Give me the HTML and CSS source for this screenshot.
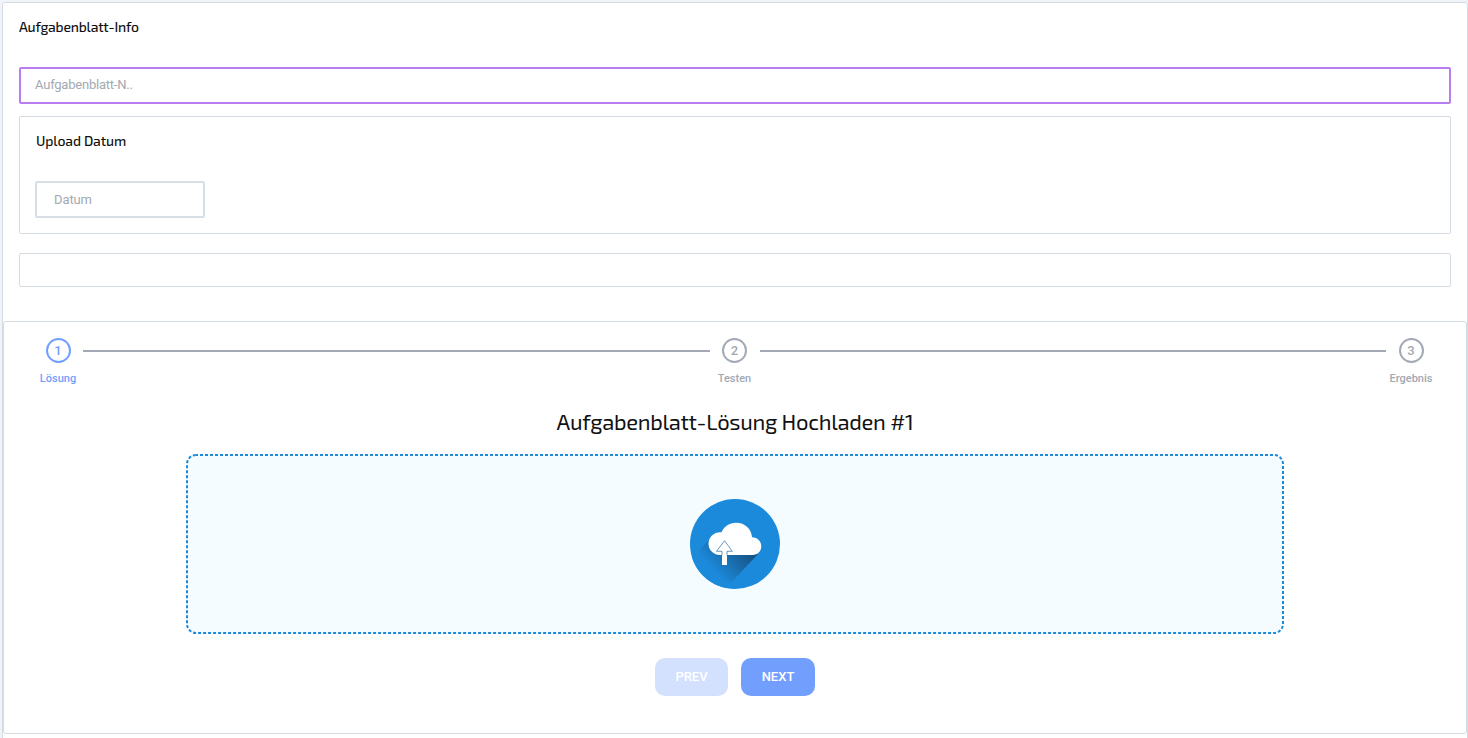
FILE: index.html
```html
<!DOCTYPE html>
<html lang="de">
<head>
<meta charset="utf-8">
<title>Aufgabenblatt</title>
<link rel="stylesheet" href="styles.css">
</head>
<body>
<main class="sheet">
  <section class="info">
    <h2 class="heading">Aufgabenblatt-Info</h2>
    <input class="name-input" type="text" placeholder="Aufgabenblatt-N.." aria-label="Aufgabenblatt-Name">
    <div class="date-card">
      <h2 class="heading heading-date">Upload Datum</h2>
      <input class="date-input" type="text" placeholder="Datum" aria-label="Datum">
    </div>
    <div class="empty-card"></div>
  </section>
  <section class="wizard">
    <div class="stepper">
      <div class="step active"><span class="dot">1</span><span class="label">Lösung</span></div>
      <div class="line"></div>
      <div class="step"><span class="dot">2</span><span class="label">Testen</span></div>
      <div class="line"></div>
      <div class="step"><span class="dot">3</span><span class="label">Ergebnis</span></div>
    </div>
    <h1 class="title">Aufgabenblatt-Lösung Hochladen #1</h1>
    <div class="dropzone">
      <svg class="outline" width="1098" height="180" viewBox="0 0 1098 180">
        <rect x="1" y="1" width="1096" height="178" rx="9" fill="none" stroke="#1c8adb" stroke-width="2" stroke-dasharray="3 2" stroke-dashoffset="1"/>
      </svg>
      <svg width="90" height="90" viewBox="0 0 90 90">
        <defs>
          <clipPath id="disc"><circle cx="45" cy="45" r="45"/></clipPath>
          <linearGradient id="shade" gradientUnits="userSpaceOnUse" x1="59" y1="50" x2="29" y2="78">
            <stop offset="0" stop-color="#17507f"/>
            <stop offset="1" stop-color="#1c8adb"/>
          </linearGradient>
        </defs>
        <circle cx="45" cy="45" r="45" fill="#1c8adb"/>
        <path clip-path="url(#disc)" d="M20 40 L0 60 V90 H35 L68 55 Z" fill="url(#shade)"/>
        <path d="M29.5 56 A11.3 11.3 0 0 1 18.5 44.7 C18.5 37.5 24.5 32.5 31.5 33.2 C34 27.3 39.5 23.7 46 23.7 C55 23.7 61.5 30 62 38.3 C67.5 38.3 71.3 42.3 71.3 47.3 C71.3 52.3 67.5 56 62.7 56 Z" fill="#fff"/>
        <path d="M34.5 41.7 L42.3 52.3 H37 V66 H32 V52.3 H26.5 Z" fill="#fff"/>
        <path d="M32 56 V52.3 H26.5 L34.5 41.7 L42.3 52.3 H37 V56" fill="none" stroke="#427eae" stroke-width="0.8"/>
      </svg>
    </div>
    <div class="actions">
      <button class="btn btn-prev" disabled>PREV</button>
      <button class="btn btn-next">NEXT</button>
    </div>
  </section>
</main>
</body>
</html>
```
FILE: styles.css
```css
* { box-sizing: border-box; }
body {
  margin: 0;
  height: 738px;
  overflow: hidden;
  background: #f0f4f8;
  font-family: Roboto, "Liberation Sans", sans-serif;
  color: #111;
}
.sheet {
  margin: 2px 0 0 2px;
  height: 760px;
  background: #fff;
  border: 1px solid #d5dbe2;
  border-radius: 3px;
}
.info { padding: 15px 16px 0; height: 318px; }
.heading {
  margin: 0;
  height: 18px;
  font: 500 14px/18px "Exo 2", Exo, Roboto, sans-serif;
  letter-spacing: -0.22px;
}
.heading-date { padding-left: 1px; letter-spacing: -0.12px; }
input {
  display: block;
  font: 400 13px/16px Roboto, sans-serif;
  background: #fff;
  border: 2px solid #d8dee5;
  border-radius: 2px;
  outline: 0;
}
input::placeholder { color: #a2a9b2; opacity: 1; }
.name-input {
  width: 100%;
  height: 37px;
  margin-top: 31px;
  padding: 0 14px 2px;
  border-color: #b87df0;
  letter-spacing: -0.22px;
}
.date-card {
  height: 118px;
  margin-top: 12px;
  padding: 15px 15px 0;
  border: 1px solid #d5dbe2;
  border-radius: 2px;
}
.date-input { width: 170px; height: 37px; margin-top: 31px; padding: 0 17px; letter-spacing: -0.1px; }
.empty-card {
  height: 34px;
  margin-top: 19px;
  border: 1px solid #d5dbe2;
  border-radius: 2px;
}
.wizard {
  height: 413px;
  border: 1px solid #d5dbe2;
  border-radius: 3px;
  display: flex;
  flex-direction: column;
  align-items: center;
}
.stepper {
  width: 100%;
  padding: 16px 31px 0 30px;
  display: flex;
  align-items: flex-start;
}
.step {
  width: 48px;
  flex: none;
  display: flex;
  flex-direction: column;
  align-items: center;
  color: #a2a9b4;
}
.step.active { color: #729ffe; }
.dot {
  width: 25px;
  height: 25px;
  border: 2px solid currentColor;
  border-radius: 50%;
  font: 500 13px/21px Roboto, sans-serif;
  text-align: center;
}
.label { margin-top: 9px; font: 500 11px/14px Roboto, sans-serif; }
.line { flex: 1; height: 2px; margin: 12px 1px 0; background: #a2a9b4; }
.title {
  margin: 21px 0 0;
  height: 28px;
  font: 400 22px/28px "Exo 2", Exo, Roboto, sans-serif;
  letter-spacing: -0.29px;
}
.dropzone {
  position: relative;
  width: 1098px;
  height: 180px;
  margin-top: 19px;
  display: flex;
  align-items: center;
  justify-content: center;
  background: #f4fcff;
  border-radius: 10px;
}
.outline { position: absolute; inset: 0; }
.actions { margin-top: 24px; display: flex; gap: 13px; }
.btn {
  height: 38px;
  padding: 0;
  border: 0;
  border-radius: 10px;
  font: 500 13px/38px Roboto, sans-serif;
  color: #fff;
  background: #729ffe;
}
.btn-prev { width: 73px; opacity: 0.3; }
.btn-next { width: 74px; }
```
